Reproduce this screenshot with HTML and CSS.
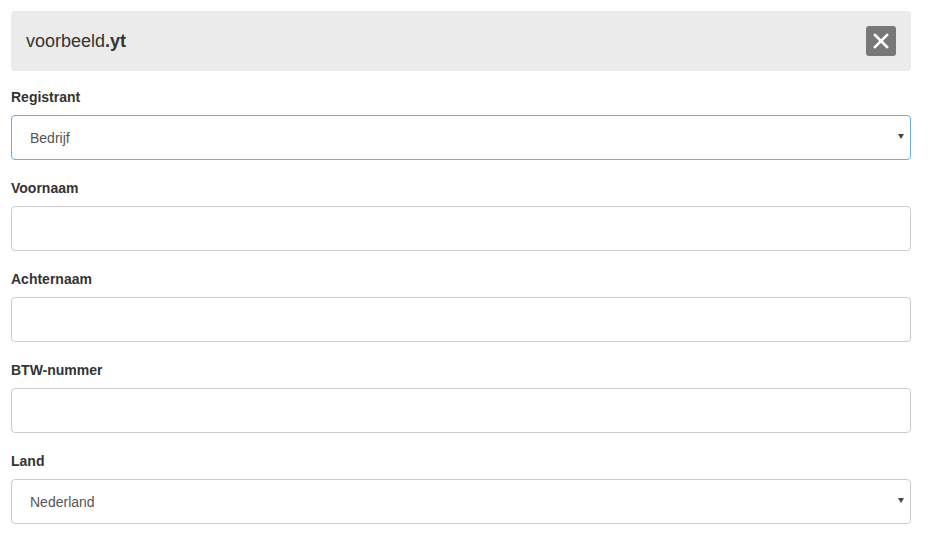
FILE: index.html
```html
<!DOCTYPE html>
<html lang="en">
<head>
    <meta charset="UTF-8">
    <meta name="viewport" content="width=device-width, initial-scale=1.0">
    <title>Domein registreren</title>
    <link rel="stylesheet" href="styles.css">
</head>
<body>
    <div class="panel">
        <div class="domain-bar">
            <span class="domain">voorbeeld<b>.yt</b></span>
            <button type="button" class="close-btn" aria-label="Sluiten">
                <svg width="16" height="16" viewBox="0 0 16 16">
                    <path d="M2 2 L14 14 M14 2 L2 14" stroke="#fff" stroke-width="2.6" stroke-linecap="square"/>
                </svg>
            </button>
        </div>

        <form id="registrantForm">
            <label class="field-label" for="registrant">Registrant</label>
            <div class="select-wrap">
                <select id="registrant" class="field focused">
                    <option>Bedrijf</option>
                    <option>Particulier</option>
                </select>
            </div>

            <label class="field-label" for="voornaam">Voornaam</label>
            <input id="voornaam" class="field" type="text">

            <label class="field-label" for="achternaam">Achternaam</label>
            <input id="achternaam" class="field" type="text">

            <label class="field-label" for="btw">BTW-nummer</label>
            <input id="btw" class="field" type="text">

            <label class="field-label" for="land">Land</label>
            <div class="select-wrap">
                <select id="land" class="field">
                    <option>Nederland</option>
                    <option>België</option>
                </select>
            </div>
        </form>
    </div>
</body>
</html>
```

FILE: styles.css
```css
body {
    font-family: "Liberation Sans", Arial, sans-serif;
    background-color: #fff;
    color: #333;
    margin: 0;
    padding: 11px;
}
.panel {
    width: 900px;
}
.domain-bar {
    display: flex;
    align-items: center;
    justify-content: space-between;
    height: 60px;
    padding: 0 15px;
    background-color: #ebebeb;
    border-radius: 4px;
    box-sizing: border-box;
}
.domain {
    font-size: 18px;
    color: #333;
}
.domain b {
    font-weight: bold;
}
.close-btn {
    display: flex;
    align-items: center;
    justify-content: center;
    width: 30px;
    height: 30px;
    padding: 0;
    border: none;
    border-radius: 3px;
    background-color: #787878;
    cursor: pointer;
}
form {
    margin: 0;
    padding-top: 16px;
}
.field-label {
    display: block;
    font-size: 14px;
    font-weight: bold;
    line-height: 20px;
    color: #333;
    margin-bottom: 8px;
}
.field {
    display: block;
    width: 100%;
    height: 45px;
    margin: 0 0 18px;
    padding: 0 18px;
    box-sizing: border-box;
    border: 1px solid #ccc;
    border-radius: 4px;
    background-color: #fff;
    font-family: inherit;
    font-size: 14px;
    color: #555;
    outline: none;
}
select.field {
    -webkit-appearance: none;
    appearance: none;
}
.field.focused {
    border-color: #66afe9;
}
.select-wrap {
    position: relative;
}
.select-wrap::after {
    content: "";
    position: absolute;
    right: 7px;
    top: 19px;
    border-left: 3.5px solid transparent;
    border-right: 3.5px solid transparent;
    border-top: 5px solid #444;
    pointer-events: none;
}
```
